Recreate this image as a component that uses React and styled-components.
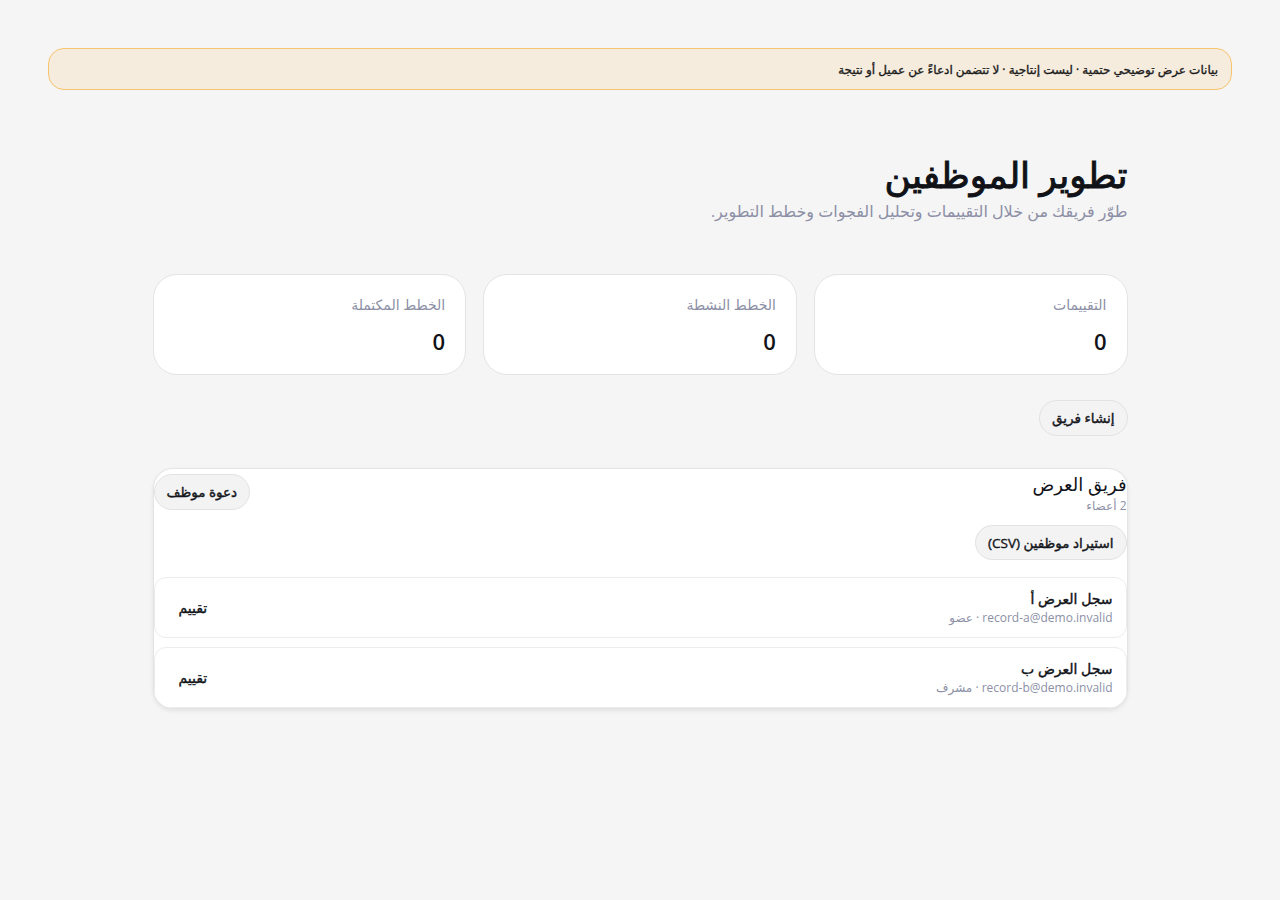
import React from "react";
import styled, { createGlobalStyle } from "styled-components";

const GlobalStyle = createGlobalStyle`
  body {
    margin: 0;
    background: #f5f5f5;
    font-family: "Open Sans", "DejaVu Sans", sans-serif;
    color: #111318;
  }
`;

// the Arabic fallback bold is much wider than the source, so weight is faked with a stroke
const strong = (w) => `
  font-weight: 400;
  -webkit-text-stroke: ${w}px currentColor;
`;

const Page = styled.div`
  direction: rtl;
  padding: 48px 48px 80px;
`;

const Banner = styled.div`
  height: 42px;
  box-sizing: border-box;
  display: flex;
  align-items: center;
  padding: 0 13px;
  background: #f6ecde;
  border: 1px solid #f7c46e;
  border-radius: 16px;
  font-size: 12px;
  ${strong(0.35)}
  color: #1b1b1b;
`;

const Main = styled.div`
  width: 975px;
  margin: 0 auto;
  padding-top: 60px;
`;

const Title = styled.h1`
  margin: 0;
  font-size: 36px;
  ${strong(1)}
  line-height: 50px;
  color: #101217;
`;

const Subtitle = styled.p`
  margin: 0;
  font-size: 16px;
  line-height: 22px;
  color: #8c8fa6;
`;

const Stats = styled.div`
  display: grid;
  grid-template-columns: repeat(3, 1fr);
  gap: 17px;
  margin-top: 52px;
`;

const StatCard = styled.div`
  height: 101px;
  box-sizing: border-box;
  background: #fff;
  border: 1px solid #e4e4e6;
  border-radius: 24px;
  padding: 19px 20px;
`;

const StatLabel = styled.div`
  font-size: 14px;
  line-height: 22px;
  color: #8c8fa6;
`;

const StatValue = styled.div`
  margin-top: 10px;
  font-size: 22px;
  font-weight: 600;
  line-height: 30px;
  color: #111318;
`;

const PillButton = styled.button`
  font-family: inherit;
  font-size: 13.5px;
  ${strong(0.4)}
  color: #15171c;
  background: #f3f3f4;
  border: 1px solid #e2e2e4;
  border-radius: 18px;
  height: ${(p) => p.$h || 36}px;
  padding: 0 12px;
  cursor: pointer;
  white-space: nowrap;
`;

const Toolbar = styled.div`
  display: flex;
  margin-top: 25px;
`;

const TeamCard = styled.div`
  margin-top: 32px;
  background: #fff;
  border: 1px solid #e4e4e6;
  border-radius: 20px;
  box-shadow: 0 2px 4px rgba(0, 0, 0, 0.08);
  overflow: hidden;
`;

const TeamHead = styled.div`
  display: flex;
  justify-content: space-between;
  align-items: flex-start;
`;

const TeamName = styled.div`
  font-size: 18px;
  line-height: 30px;
  color: #111318;
`;

const TeamMeta = styled.div`
  font-size: 12px;
  line-height: 14px;
  color: #8c8fa6;
`;

const InviteWrap = styled.div`
  padding-top: 5px;
`;

const ImportRow = styled.div`
  display: flex;
  margin-top: 12px;
`;

const Members = styled.div`
  display: flex;
  flex-direction: column;
  gap: 9px;
  margin-top: 17px;
`;

const MemberRow = styled.div`
  height: 61px;
  box-sizing: border-box;
  display: flex;
  align-items: center;
  justify-content: space-between;
  padding: 0 13px 0 24px;
  border: 1px solid #ececee;
  border-radius: 12px;
  background: #fff;
`;

const MemberName = styled.div`
  font-size: 14px;
  ${strong(0.4)}
  line-height: 20px;
  color: #111318;
`;

const MemberSub = styled.div`
  font-size: 12px;
  line-height: 17px;
  color: #8c8fa6;
`;

const RateButton = styled.button`
  font-family: inherit;
  font-size: 14px;
  ${strong(0.4)}
  color: #111318;
  background: transparent;
  border: none;
  padding: 0;
  cursor: pointer;
`;

const stats = ["التقييمات", "الخطط النشطة", "الخطط المكتملة"];

const members = [
  { name: "سجل العرض أ", email: "record-a@demo.invalid", role: "عضو" },
  { name: "سجل العرض ب", email: "record-b@demo.invalid", role: "مشرف" },
];

export default function App() {
  return (
    <>
      <GlobalStyle />
      <Page>
        <Banner>بيانات عرض توضيحي حتمية · ليست إنتاجية · لا تتضمن ادعاءً عن عميل أو نتيجة</Banner>
        <Main>
          <Title>تطوير الموظفين</Title>
          <Subtitle>طوّر فريقك من خلال التقييمات وتحليل الفجوات وخطط التطوير.</Subtitle>

          <Stats>
            {stats.map((s) => (
              <StatCard key={s}>
                <StatLabel>{s}</StatLabel>
                <StatValue>0</StatValue>
              </StatCard>
            ))}
          </Stats>

          <Toolbar>
            <PillButton>إنشاء فريق</PillButton>
          </Toolbar>

          <TeamCard>
            <TeamHead>
              <div>
                <TeamName>فريق العرض</TeamName>
                <TeamMeta>2 أعضاء</TeamMeta>
              </div>
              <InviteWrap>
                <PillButton>دعوة موظف</PillButton>
              </InviteWrap>
            </TeamHead>
            <ImportRow>
              <PillButton $h={35}>استيراد موظفين (CSV)</PillButton>
            </ImportRow>
            <Members>
              {members.map((m) => (
                <MemberRow key={m.email}>
                  <div>
                    <MemberName>{m.name}</MemberName>
                    <MemberSub>
                      {m.email} · {m.role}
                    </MemberSub>
                  </div>
                  <RateButton>تقييم</RateButton>
                </MemberRow>
              ))}
            </Members>
          </TeamCard>
        </Main>
      </Page>
    </>
  );
}
